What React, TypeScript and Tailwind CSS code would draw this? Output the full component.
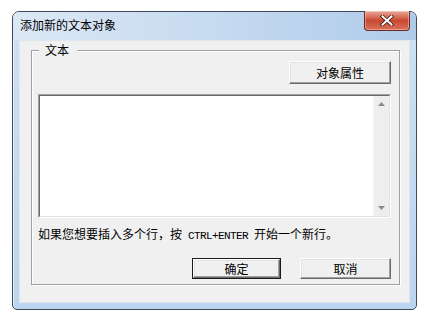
import React from "react";

const font = { fontFamily: '"Noto Sans CJK SC", "Noto Sans", sans-serif' };

function ClassicButton({ label, isDefault, w, h }: { label: string; isDefault?: boolean; w: string; h: string }) {
  const inner = (
    <div className="flex-1 flex items-center justify-center bg-[#f0f0f0] border border-t-white border-l-white border-r-[#696969] border-b-[#696969] shadow-[inset_-1px_-1px_0_#a0a0a0,inset_1px_1px_0_#e3e3e3] text-[12px] leading-[14px] text-black">
      {label}
    </div>
  );
  if (isDefault) {
    return <div className={`${w} ${h} flex border border-[#1a1a1a]`}>{inner}</div>;
  }
  return <div className={`${w} ${h} flex`}>{inner}</div>;
}

export default function App() {
  return (
    <div className="w-[435px] h-[326px] bg-white pt-[11px] pl-[12px]" style={font}>
      <div className="w-[405px] h-[299px] flex flex-col border border-[#3f4b58] rounded-t-[7px] rounded-b-[5px] bg-gradient-to-b from-[#cfe0f3] to-[#bbd5f0] shadow-[inset_1px_1px_0_rgba(255,255,255,0.6)]">
        <div className="h-[28px] flex items-start justify-between pl-[7px] pr-[6px] rounded-t-[6px] bg-gradient-to-r from-[#dce8f5] via-[#c6daf0] to-[#afcbea]">
          <div className="mt-[5px] text-[12px] leading-[16px] text-black">添加新的文本对象</div>
          <div className="-mt-px w-[46px] h-[20px] flex items-center justify-center rounded-b-[4px] border border-t-0 border-[#6e2a20] bg-gradient-to-b from-[#e9a99b] via-[#c9472f] to-[#d9705a] shadow-[inset_0_0_0_1px_rgba(255,255,255,0.35)]">
            <svg width="14" height="11" viewBox="0 0 14 11">
              <path d="M2.5 1.5 L11.5 9.5 M11.5 1.5 L2.5 9.5" stroke="#3b1a14" strokeWidth="3.6" strokeLinecap="square" fill="none" />
              <path d="M2.5 1.5 L11.5 9.5 M11.5 1.5 L2.5 9.5" stroke="#ffffff" strokeWidth="2" strokeLinecap="square" fill="none" />
            </svg>
          </div>
        </div>
        <div className="mx-[6px] mb-[6px] flex-1 border border-[#dfe6ee] bg-[#f0f0f0] pt-px">
          <fieldset className="ml-[11px] w-[369px] h-[243px] border border-[#a0a0a0] shadow-[inset_1px_1px_0_#fff,1px_1px_0_#fff]">
            <legend className="ml-[7px] pl-[6px] pr-[8px] text-[12px] leading-[16px] text-black bg-[#f0f0f0]">文本</legend>
            <div className="flex flex-col pl-[6px] pr-[8px]">
              <div className="self-end mt-[3px]">
                <ClassicButton label="对象属性" w="w-[102px]" h="h-[23px]" />
              </div>
              <div className="mt-[10px] h-[124px] flex border border-t-[#a0a0a0] border-l-[#a0a0a0] border-r-white border-b-white">
                <div className="flex-1 flex border border-t-[#696969] border-l-[#696969] border-r-[#e3e3e3] border-b-[#e3e3e3] bg-white">
                  <div className="flex-1" />
                  <div className="w-[16px] flex flex-col items-center justify-between bg-[#eeeeee] border-l border-[#f7f7f7] py-[6px]">
                    <svg width="7" height="4" viewBox="0 0 7 4">
                      <path d="M3.5 0 L7 4 L0 4 Z" fill="#8a8a8a" />
                    </svg>
                    <svg width="7" height="4" viewBox="0 0 7 4">
                      <path d="M0 0 L7 0 L3.5 4 Z" fill="#8a8a8a" />
                    </svg>
                  </div>
                </div>
              </div>
              <div className="mt-[8px] text-[12px] leading-[16px] text-black whitespace-nowrap">
                如果您想要插入多个行，按<span className="inline-block w-[6px]" />
                <span className="text-[11px] tracking-[-0.6px]" style={{ fontFamily: '"Liberation Mono", monospace' }}>CTRL+ENTER</span>
                <span className="inline-block w-[6px]" />开始一个新行。
              </div>
              <div className="mt-[14px] flex justify-end gap-[19px]">
                <ClassicButton label="确定" isDefault w="w-[89px]" h="h-[21px]" />
                <ClassicButton label="取消" w="w-[91px]" h="h-[21px]" />
              </div>
            </div>
          </fieldset>
        </div>
      </div>
    </div>
  );
}
